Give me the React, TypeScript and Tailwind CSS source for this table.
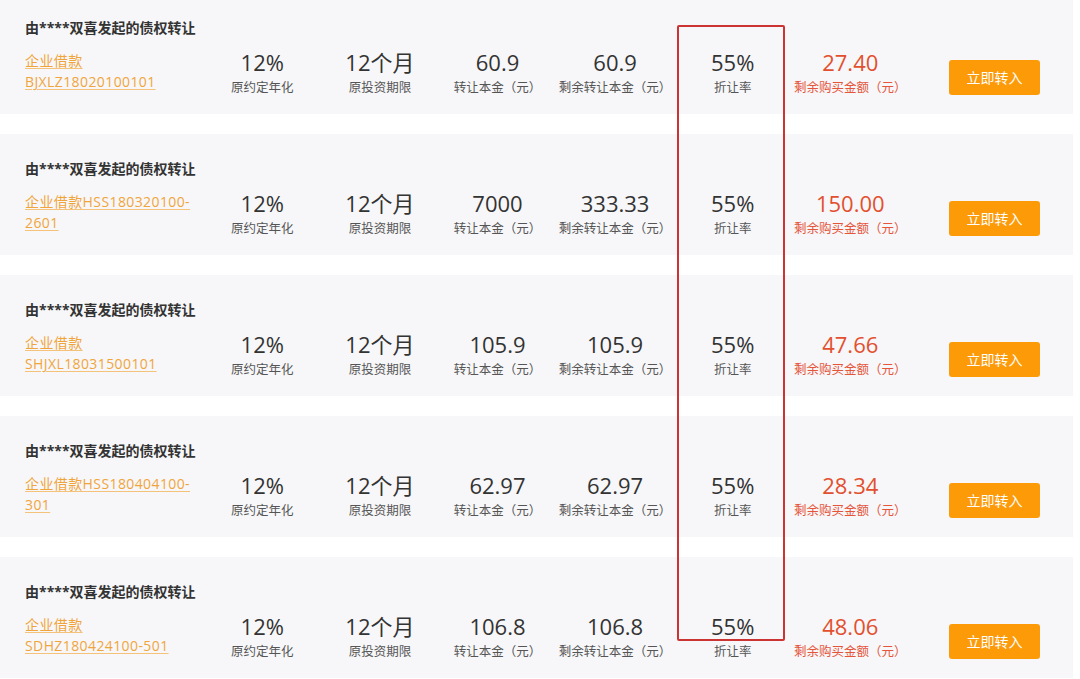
const rows = [
  { link: ["企业借款", "BJXLZ18020100101"], principal: "60.9", remain: "60.9", buy: "27.40" },
  { link: ["企业借款HSS180320100-", "2601"], principal: "7000", remain: "333.33", buy: "150.00" },
  { link: ["企业借款", "SHJXL18031500101"], principal: "105.9", remain: "105.9", buy: "47.66" },
  { link: ["企业借款HSS180404100-", "301"], principal: "62.97", remain: "62.97", buy: "28.34" },
  { link: ["企业借款", "SDHZ180424100-501"], principal: "106.8", remain: "106.8", buy: "48.06" },
];

const Stat = ({ value, label, red }: { value: string; label: string; red?: boolean }) => (
  <div className="w-[117.6px] shrink-0 flex flex-col items-center mt-[-1px]">
    <div className={`text-[22px] leading-[26px] ${red ? "text-[#e2502f]" : "text-[#333]"}`}>{value}</div>
    <div className={`text-[12.5px] leading-[18px] mt-[4px] whitespace-nowrap ${red ? "text-[#e4553a]" : "text-[#555]"}`}>
      {label}
    </div>
  </div>
);

export default function App() {
  return (
    <div
      className="relative w-[1080px] h-[679px] overflow-hidden bg-white"
      style={{ fontFamily: '"Open Sans", "Noto Sans CJK SC", sans-serif' }}
    >
      <div className="flex flex-col gap-[20px] mt-[-7px] pr-[7px]">
        {rows.map((r, i) => (
          <div key={i} className="h-[121px] shrink-0 bg-[#f7f7f9] pl-[25px] pt-[25px]">
            <div className="text-[14px] leading-[20px] font-bold text-[#333]">由****双喜发起的债权转让</div>
            <div className="flex items-start mt-[12px]">
              <div className="w-[178.5px] shrink-0 text-[14px] leading-[21px] tracking-[0.4px] text-[#f0a53c] underline decoration-[#f5c27a] underline-offset-2">
                <div>{r.link[0]}</div>
                <div>{r.link[1]}</div>
              </div>
              <Stat value="12%" label="原约定年化" />
              <Stat value="12个月" label="原投资期限" />
              <Stat value={r.principal} label="转让本金（元）" />
              <Stat value={r.remain} label="剩余转让本金（元）" />
              <Stat value="55%" label="折让率" />
              <Stat value={r.buy} label="剩余购买金额（元）" red />
              <button className="ml-[40px] mt-[10px] w-[91px] h-[35px] shrink-0 rounded-[3px] bg-[#fd9a08] text-white text-[14px]">
                立即转入
              </button>
            </div>
          </div>
        ))}
      </div>
      <div className="absolute left-[677px] top-[25px] w-[108px] h-[616px] border-2 border-[#cc3434] rounded-[2px]" />
    </div>
  );
}
